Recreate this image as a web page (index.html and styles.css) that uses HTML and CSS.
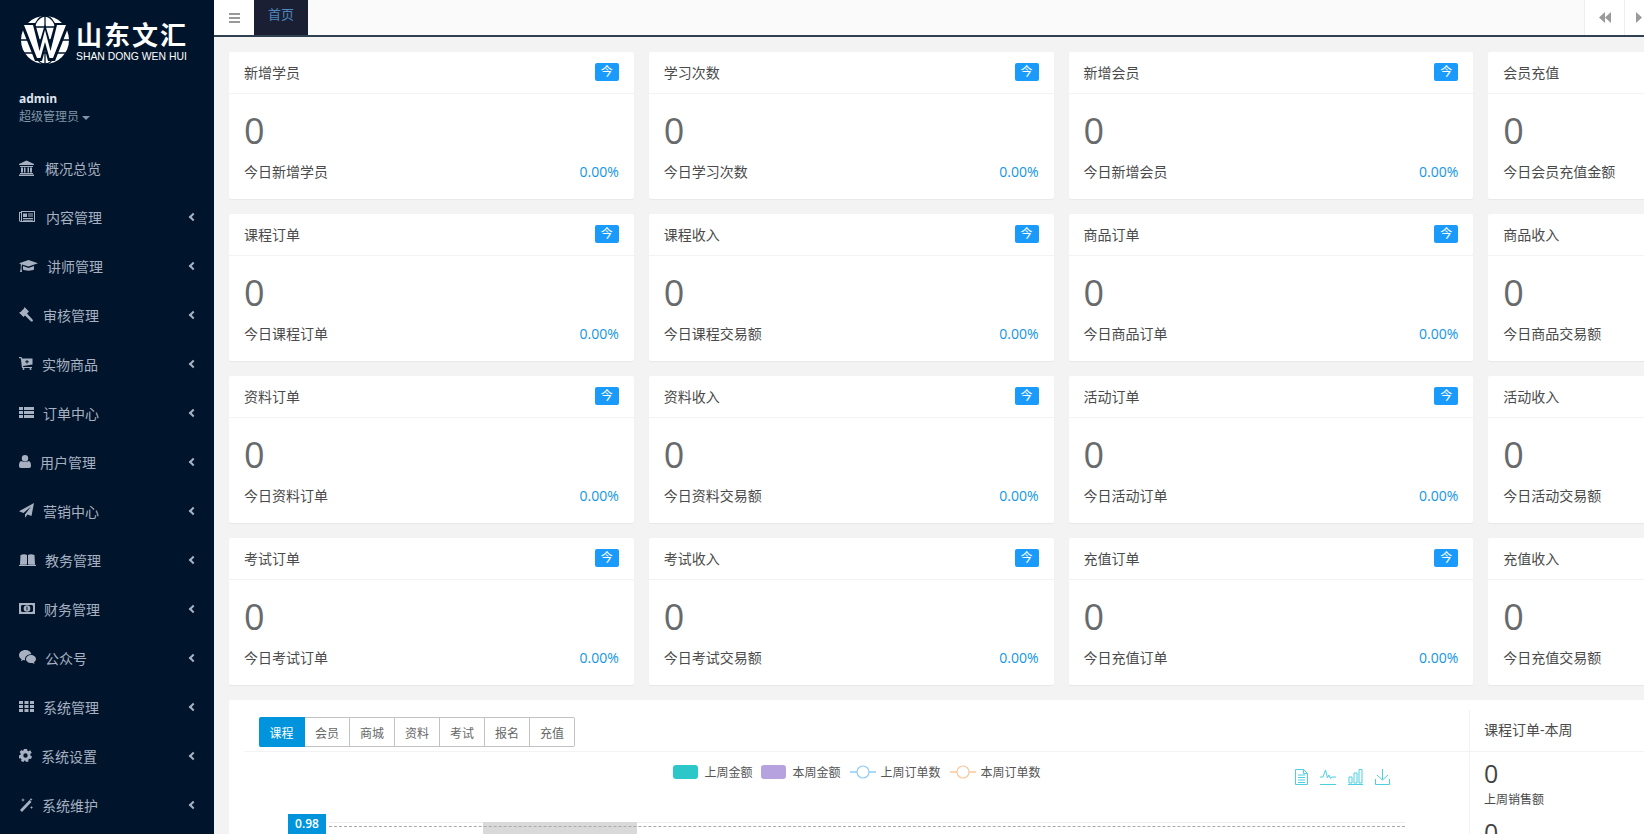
FILE: index.html
```html
<!DOCTYPE html>
<html lang="zh-CN">
<head>
<meta charset="utf-8">
<title>山东文汇</title>
<link rel="stylesheet" href="styles.css">
</head>
<body>
<div class="app">
  <aside class="sidebar">
    <div class="logo">
      <svg class="globe" width="52" height="50" viewBox="0 0 52 50">
        <circle cx="26" cy="25" r="24" fill="#fff"/>
        <g fill="none" stroke="#00152b" stroke-width="1.3">
          <ellipse cx="26" cy="25" rx="13" ry="24"/>
          <path d="M5 12h42M2 25h48M5 38h42"/>
          <path d="M26 1v48"/>
        </g>
        <path d="M1 8 L16 8 L21 26 L26 9 L31 26 L36 8 L51 8 L36 46 L29 46 L26 35 L23 46 L16 46Z" fill="#00152b"/>
        <path d="M5 10 L14 10 L20.500 36 L26 15 L31.500 36 L38 10 L47 10 L34 43 L30.500 43 L26 27 L21.500 43 L18 43Z" fill="#fff"/>
      </svg>
      <div class="brand">
        <div class="brand-cn">山东文汇</div>
        <div class="brand-en">SHAN DONG WEN HUI</div>
      </div>
    </div>
    <div class="profile">
      <div class="profile-name">admin</div>
      <div class="profile-role">超级管理员<span class="caret"></span></div>
    </div>
    <nav class="nav">
      <a class="nav-item">
        <svg width="17" height="16" viewBox="0 0 17 16"><path d="M7.500 0.500 15 4v1H0V4zM1 6h13v1H1zM2 7.500h2v5H2zM5 7.500h1.500v5H5zM8.500 7.500H10v5H8.500zM11 7.500h2v5h-2zM1 13h13v1H1zM0 14.500h15V16H0z"/></svg>
        <span>概况总览</span>
      </a>
      <a class="nav-item">
        <svg width="18" height="11" viewBox="0 0 18 11"><path fill-rule="evenodd" d="M0 1h2V0h14v11H1.500L0 10zM1 2v7.500l.7.500H2V2zM3 1v9h12V1zM4 2.500h4v3.500H4zM9 2.500h5V3.500H9zM9 4.500h5V5.500H9zM4 7h10v1H4zM4 8.700h10v1H4z"/></svg>
        <span>内容管理</span><i class="chev"></i>
      </a>
      <a class="nav-item">
        <svg width="19" height="12" viewBox="0 0 19 12"><path d="M9.500 0 19 3.300 9.500 6.600 3 4.400 2.500 8 3 12H1l.8-4V4L0 3.300zM4 6l5.500 2L15 6v3.500c-1.500 1.500-9.500 1.500-11 0z"/></svg>
        <span>讲师管理</span><i class="chev"></i>
      </a>
      <a class="nav-item">
        <svg width="15" height="15" viewBox="0 0 15 15"><path d="M5.500 0 10 4.500 8 6.500 13.500 12.500 14 13.800 13 14.800 11.800 14.300 6 8.500 4.500 10 0 5.500 1.500 5 5 1.500z"/></svg>
        <span>审核管理</span><i class="chev"></i>
      </a>
      <a class="nav-item">
        <svg width="14" height="13" viewBox="0 0 14 13"><path fill-rule="evenodd" d="M0 0h2.500l.5 1.500h10.500v6L4 9l.2 1H13v1H3L1.800 1.200H0zM7.500 3V4.300H6.200V5.300H7.500V6.600H8.500V5.300H9.800V4.300H8.500V3z"/><circle cx="4.500" cy="12" r="1"/><circle cx="11.500" cy="12" r="1"/></svg>
        <span>实物商品</span><i class="chev"></i>
      </a>
      <a class="nav-item">
        <svg width="15" height="11" viewBox="0 0 15 11"><path d="M0 0h4v3H0zM5 0h10v3H5zM0 4h4v3H0zM5 4h10v3H5zM0 8h4v3H0zM5 8h10v3H5z"/></svg>
        <span>订单中心</span><i class="chev"></i>
      </a>
      <a class="nav-item">
        <svg width="12" height="13" viewBox="0 0 12 13"><circle cx="6" cy="3.200" r="3.200"/><path d="M2 6c1 1 7 1 8 0 1.500.5 2 2.500 2 5 0 1-.7 2-2 2H2c-1.300 0-2-1-2-2 0-2.500.5-4.500 2-5z"/></svg>
        <span>用户管理</span><i class="chev"></i>
      </a>
      <a class="nav-item">
        <svg width="15" height="15" viewBox="0 0 15 15"><path d="M15 0 12.500 13 8.500 11.500 6 14.800V11.500L12 3.500 4.500 10 0 8.300z"/></svg>
        <span>营销中心</span><i class="chev"></i>
      </a>
      <a class="nav-item">
        <svg width="17" height="12" viewBox="0 0 17 12"><path d="M1.500 1C4 0 6.500 0 8 1v9.500C6 9.800 3.500 9.800 1 10.500zM9 1c1.500-1 4-1 6.500 0l.5 9.500c-2.500-.7-5-.7-7 0z M0 11c3-1 6-1 8 0h1c2-1 5-1 8 0v1H0z"/></svg>
        <span>教务管理</span><i class="chev"></i>
      </a>
      <a class="nav-item">
        <svg width="16" height="11" viewBox="0 0 16 11"><path fill-rule="evenodd" d="M0 0h16v11H0zM3 2 2 3v5l1 1h10l1-1V3l-1-1zM8 2.200a3.300 3.300 0 1 1 0 6.600 3.300 3.300 0 0 1 0-6.600zM7.500 3.800v3.400h1V3.800z"/></svg>
        <span>财务管理</span><i class="chev"></i>
      </a>
      <a class="nav-item">
        <svg width="17" height="15" viewBox="0 0 17 15"><path d="M6.500 0C9.500 0 12 1.700 12.400 4.200 9 4 6 6.200 6 9c0 .5.100 1 .2 1.300-.7 0-1.400-.1-2-.3L2 11.200l.6-1.900C1 8.300 0 6.900 0 5.200 0 2.300 2.900 0 6.500 0z"/><path d="M12 5c2.700 0 5 1.800 5 4 0 1.300-.8 2.400-2 3.200l.5 1.800-2-1.100c-2.900.7-6.500-1-6.500-3.900 0-2.200 2.300-4 5-4z"/></svg>
        <span>公众号</span><i class="chev"></i>
      </a>
      <a class="nav-item">
        <svg width="15" height="11" viewBox="0 0 15 11"><path d="M0 0h4v3H0zM5.500 0h4v3h-4zM11 0h4v3h-4zM0 4h4v3H0zM5.500 4h4v3h-4zM11 4h4v3h-4zM0 8h4v3H0zM5.500 8h4v3h-4zM11 8h4v3h-4z"/></svg>
        <span>系统管理</span><i class="chev"></i>
      </a>
      <a class="nav-item">
        <svg width="13" height="13" viewBox="0 0 13 13"><path fill-rule="evenodd" d="M5 0h3l.4 1.800 1.200.5L11.200 1.300 12.700 3.700 11.300 5 11.300 6.500 13 7.500 12 10 10.300 9.700 9.300 10.800 9.500 12.500 7 13 6.300 11.500H5.500L4.500 13 2 12 2.500 10.300 1.500 9.300 0 9.500V6.500L1.500 5.800 1.700 4.500.6 3 2.500 1.100 4 2zM6.500 4.300a2.200 2.200 0 1 0 0 4.400 2.200 2.200 0 0 0 0-4.400z"/></svg>
        <span>系统设置</span><i class="chev"></i>
      </a>
      <a class="nav-item">
        <svg width="14" height="14" viewBox="0 0 14 14"><path d="M10.500 2 12.500 4 3 14 1 12zM4 0 4.500 1.500 6 2 4.500 2.500 4 4 3.500 2.500 2 2 3.500 1.500zM12.500 8 13 9 14 9.500 13 10 12.500 11 12 10 11 9.500 12 9zM12 0 12.500 1 13.500 1.500 12.500 2 12 3 11.500 2 10.500 1.500 11.500 1z"/></svg>
        <span>系统维护</span><i class="chev"></i>
      </a>
    </nav>
  </aside>

  <main class="main">
    <header class="topbar">
      <button class="burger"><span></span><span></span><span></span></button>
      <div class="tab">首页</div>
      <div class="topbar-right">
        <div class="top-btn"><svg width="12" height="11" viewBox="0 0 12 11"><path d="M6 0v11L0 5.500zM12 0v11L6 5.500z"/></svg></div>
        <div class="top-btn"><svg width="6" height="11" viewBox="0 0 6 11"><path d="M0 0v11l6-5.500z"/></svg></div>
      </div>
    </header>

    <div class="content">
      <section class="cards">
        <article class="card"><div class="card-head"><span>新增学员</span><b class="badge">今</b></div><div class="card-body"><div class="num">0</div><div class="foot"><span>今日新增学员</span><span class="pct">0.00%</span></div></div></article>
        <article class="card"><div class="card-head"><span>学习次数</span><b class="badge">今</b></div><div class="card-body"><div class="num">0</div><div class="foot"><span>今日学习次数</span><span class="pct">0.00%</span></div></div></article>
        <article class="card"><div class="card-head"><span>新增会员</span><b class="badge">今</b></div><div class="card-body"><div class="num">0</div><div class="foot"><span>今日新增会员</span><span class="pct">0.00%</span></div></div></article>
        <article class="card"><div class="card-head"><span>会员充值</span><b class="badge">今</b></div><div class="card-body"><div class="num">0</div><div class="foot"><span>今日会员充值金额</span><span class="pct">0.00%</span></div></div></article>

        <article class="card"><div class="card-head"><span>课程订单</span><b class="badge">今</b></div><div class="card-body"><div class="num">0</div><div class="foot"><span>今日课程订单</span><span class="pct">0.00%</span></div></div></article>
        <article class="card"><div class="card-head"><span>课程收入</span><b class="badge">今</b></div><div class="card-body"><div class="num">0</div><div class="foot"><span>今日课程交易额</span><span class="pct">0.00%</span></div></div></article>
        <article class="card"><div class="card-head"><span>商品订单</span><b class="badge">今</b></div><div class="card-body"><div class="num">0</div><div class="foot"><span>今日商品订单</span><span class="pct">0.00%</span></div></div></article>
        <article class="card"><div class="card-head"><span>商品收入</span><b class="badge">今</b></div><div class="card-body"><div class="num">0</div><div class="foot"><span>今日商品交易额</span><span class="pct">0.00%</span></div></div></article>

        <article class="card"><div class="card-head"><span>资料订单</span><b class="badge">今</b></div><div class="card-body"><div class="num">0</div><div class="foot"><span>今日资料订单</span><span class="pct">0.00%</span></div></div></article>
        <article class="card"><div class="card-head"><span>资料收入</span><b class="badge">今</b></div><div class="card-body"><div class="num">0</div><div class="foot"><span>今日资料交易额</span><span class="pct">0.00%</span></div></div></article>
        <article class="card"><div class="card-head"><span>活动订单</span><b class="badge">今</b></div><div class="card-body"><div class="num">0</div><div class="foot"><span>今日活动订单</span><span class="pct">0.00%</span></div></div></article>
        <article class="card"><div class="card-head"><span>活动收入</span><b class="badge">今</b></div><div class="card-body"><div class="num">0</div><div class="foot"><span>今日活动交易额</span><span class="pct">0.00%</span></div></div></article>

        <article class="card"><div class="card-head"><span>考试订单</span><b class="badge">今</b></div><div class="card-body"><div class="num">0</div><div class="foot"><span>今日考试订单</span><span class="pct">0.00%</span></div></div></article>
        <article class="card"><div class="card-head"><span>考试收入</span><b class="badge">今</b></div><div class="card-body"><div class="num">0</div><div class="foot"><span>今日考试交易额</span><span class="pct">0.00%</span></div></div></article>
        <article class="card"><div class="card-head"><span>充值订单</span><b class="badge">今</b></div><div class="card-body"><div class="num">0</div><div class="foot"><span>今日充值订单</span><span class="pct">0.00%</span></div></div></article>
        <article class="card"><div class="card-head"><span>充值收入</span><b class="badge">今</b></div><div class="card-body"><div class="num">0</div><div class="foot"><span>今日充值交易额</span><span class="pct">0.00%</span></div></div></article>
      </section>

      <section class="panel">
        <div class="chart-col">
          <div class="btn-row">
            <div class="btn-group">
              <button class="seg active">课程</button><button class="seg">会员</button><button class="seg">商城</button><button class="seg">资料</button><button class="seg">考试</button><button class="seg">报名</button><button class="seg">充值</button>
            </div>
          </div>
          <div class="chart">
            <div class="legend">
              <span class="leg"><i class="swatch teal"></i>上周金额</span>
              <span class="leg"><i class="swatch purple"></i>本周金额</span>
              <span class="leg leg-line"><svg width="26" height="14" viewBox="0 0 26 14"><path d="M0 7h7M19 7h7" stroke="#8ecbf6" stroke-width="1.500"/><circle cx="13" cy="7" r="6" fill="#fff" stroke="#8ecbf6" stroke-width="1.200"/></svg>上周订单数</span>
              <span class="leg leg-line"><svg width="26" height="14" viewBox="0 0 26 14"><path d="M0 7h7M19 7h7" stroke="#fcc79d" stroke-width="1.500"/><circle cx="13" cy="7" r="6" fill="#fff" stroke="#fcc79d" stroke-width="1.200"/></svg>本周订单数</span>
            </div>
            <div class="tools">
              <svg width="13" height="16" viewBox="0 0 13 16"><path d="M.5.500h8l4 4v11H.5zM8.500.500v4h4M3 6h7M3 8.500h7M3 11h7M3 13.500h7"/></svg>
              <svg width="16" height="16" viewBox="0 0 16 16"><path d="M0 8h3l2.500-7 2 8 1.500-3 1.500 3.500 1.500-1.500h4M0 15.500h16"/></svg>
              <svg width="15" height="16" viewBox="0 0 15 16"><path d="M1 8h3v6H1zM6 4h3v10H6zM11 .500h3V14h-3zM0 15.500h15"/></svg>
              <svg width="15" height="16" viewBox="0 0 15 16"><path d="M7.500 0v11M2 6l5.500 5L13 6M.5 10v5.500h14V10"/></svg>
            </div>
            <div class="plot">
              <span class="y-tag">0.98</span>
              <div class="plot-line"><div class="band"></div></div>
            </div>
          </div>
        </div>
        <aside class="summary">
          <div class="summary-head">课程订单-本周</div>
          <div class="summary-body">
            <div class="sum-num">0</div>
            <div class="sum-label">上周销售额</div>
            <div class="sum-num sum-next">0</div>
          </div>
        </aside>
      </section>
    </div>
  </main>
</div>
</body>
</html>
```

FILE: styles.css
```css
* { box-sizing: border-box; }
html, body { margin: 0; height: 100%; overflow: hidden; }
body {
  font-family: "Open Sans", "Noto Sans CJK SC", sans-serif;
  font-size: 14px;
  color: #676a6c;
  background: #f3f3f4;
}
.app { display: flex; width: 1644px; height: 834px; overflow: hidden; }

/* sidebar */
.sidebar { flex: 0 0 214px; background: #00152b; color: #a7b1c2; overflow: hidden; }
.logo { display: flex; align-items: flex-start; height: 85px; padding: 15px 0 0 19px; color: #fff; }
.globe { flex: none; }
.brand { margin-left: 5px; padding-top: 4px; }
.brand-cn { font: 700 26px/30px "Noto Sans CJK SC", sans-serif; letter-spacing: 2px; white-space: nowrap; }
.brand-en { font: 10.400px/12px "Liberation Sans", sans-serif; white-space: nowrap; margin-top: 2px; }
.profile { height: 58px; padding: 6px 0 0 19px; }
.profile-name { font: 700 12px/16px "Open Sans", sans-serif; color: #dfe4ed; }
.profile-role { font-size: 12px; line-height: 20px; color: #8095a8; }
.caret { display: inline-block; margin-left: 3px; vertical-align: middle; border: 4px solid transparent; border-top-color: #8095a8; border-bottom: 0; }
.nav-item { display: flex; align-items: center; gap: 9px; height: 49px; padding-left: 19px; font-size: 14px; color: #a7b1c2; position: relative; }
.nav-item svg { flex: none; fill: #a7b1c2; }
.chev { position: absolute; left: 190px; top: 22px; width: 6px; height: 6px; border-left: 2px solid #a7b1c2; border-bottom: 2px solid #a7b1c2; transform: rotate(45deg); }

/* top bar */
.main { flex: 1; min-width: 0; overflow: hidden; }
.topbar { display: flex; height: 37px; background: #fafafa; border-bottom: 2px solid #2f4050; }
.burger { width: 40px; padding: 0; border: 0; background: #fff; display: flex; flex-direction: column; align-items: center; justify-content: center; gap: 2px; }
.burger span { width: 11px; height: 2px; background: #999; }
.tab { width: 54px; background: #1a1f33; color: #4e87bd; text-align: center; line-height: 28px; font-size: 13px; }
.topbar-right { margin-left: auto; display: flex; }
.top-btn { width: 40px; background: #fff; border-left: 1px solid #eee; display: flex; align-items: center; justify-content: center; }
.top-btn svg { fill: #9a9a9a; }
.top-btn + .top-btn { width: 20px; justify-content: flex-start; padding-left: 11px; }

/* content */
.content { padding: 15px; width: 1700px; }
.cards { display: grid; grid-template-columns: repeat(4, 404.750px); gap: 15px; }
.card { height: 147px; background: #fff; border-radius: 2px; box-shadow: 0 1px 1px rgba(0, 0, 0, .05); }
.card-head { display: flex; justify-content: space-between; align-items: center; height: 42px; padding: 0 15px 2px; border-bottom: 1px solid #f3f3f3; font-size: 14px; color: #4a4a4a; }
.badge { width: 24px; height: 18px; border-radius: 2px; background: #1a9bfc; color: #fff; font-weight: 400; font-size: 12px; line-height: 18px; text-align: center; margin-top: 1px; }
.card-body { padding: 0 15px; }
.num { font-size: 36px; line-height: 50px; height: 50px; margin-top: 12px; color: #676a6c; }
.foot { display: flex; justify-content: space-between; align-items: center; height: 30px; font-size: 14px; color: #4a4a4a; }
.pct { color: #1296e6; font-size: 14px; }

/* chart panel */
.panel { display: flex; margin-top: 15px; height: 200px; background: #fff; border-radius: 2px; }
.chart-col { width: 1241px; padding-left: 15px; }
.btn-row { height: 52px; padding: 17px 0 0 15px; border-bottom: 1px solid #f3f3f3; }
.btn-group { display: flex; }
.seg { width: 45px; height: 30px; padding: 0; margin: 0; border: 1px solid #c2c2c2; border-left-width: 0; background: #fff; color: #666; font: 12px "Noto Sans CJK SC", sans-serif; }
.seg:last-child { border-radius: 0 2px 2px 0; }
.seg.active { width: 46px; border-color: #0094dc; background: #0094dc; color: #fff; border-radius: 2px 0 0 2px; }

.chart { position: relative; height: 148px; }
.legend { display: flex; justify-content: center; gap: 9px; padding-top: 13px; font: 12px/14px "Noto Sans CJK SC", sans-serif; color: #555; }
.leg { display: flex; align-items: center; gap: 6px; }
.leg-line { gap: 5px; }
.swatch { width: 25px; height: 14px; border-radius: 3px; }
.teal { background: #2ec7c9; }
.purple { background: #b6a2de; }
.tools { position: absolute; top: 17px; left: 1051px; display: flex; gap: 12px; }
.tools svg { fill: none; stroke: #4dd0e1; stroke-width: 1; }
.plot { position: absolute; top: 70px; left: 0; width: 100%; }
.plot-line { position: absolute; left: 85px; width: 1076px; height: 5px; border-top: 1px solid #eee; }
.plot-line::after { content: ""; position: absolute; left: 0; right: 0; top: 3px; border-top: 1px dashed #aaa; }
.band { position: absolute; left: 154px; width: 154px; top: -1px; height: 60px; background: #d9d9d9; }
.y-tag { position: absolute; z-index: 1; left: 44px; top: -8px; width: 38px; height: 22px; background: #0094dc; color: #fff; text-align: center; font: 600 12px/20px "Open Sans", sans-serif; }

.summary { flex: 1; border-left: 1px solid #f3f3f3; margin-top: 10px; margin-left: -1px; }
.summary-head { height: 42px; padding: 9px 14px 0; border-bottom: 1px solid #f3f3f3; font-size: 14px; color: #4a4a4a; }
.summary-body { padding: 0 14px; }
.sum-num { font-size: 25px; line-height: 30px; color: #444; margin-top: 6px; }
.sum-label { font-size: 12px; line-height: 20px; color: #4a4a4a; margin-top: 2px; }
.sum-next { margin-top: 7px; }
```
